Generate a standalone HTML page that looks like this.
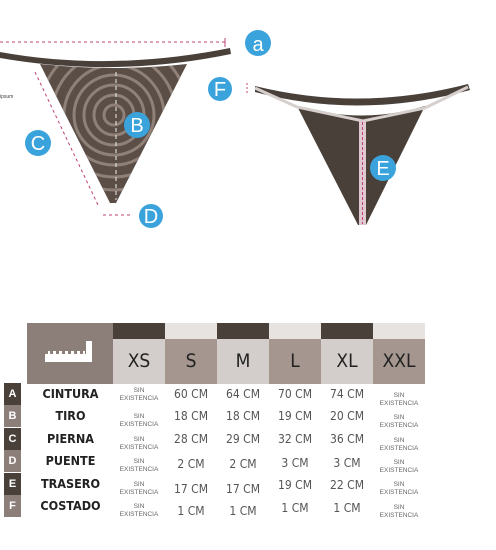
<!DOCTYPE html>
<html><head><meta charset="utf-8"><style>
*{margin:0;padding:0;box-sizing:border-box}
body{width:496px;height:550px;background:#fff;position:relative;overflow:hidden;font-family:"Liberation Sans",sans-serif}
.a{position:absolute}
.c{position:absolute;width:52px;text-align:center;color:#555;font-size:12px;font-family:"DejaVu Sans Condensed","Liberation Sans",sans-serif;font-weight:200}
.sin{position:absolute;width:52px;text-align:center;color:#666;font-size:6.5px;line-height:8px}
.lab{position:absolute;left:28px;width:85px;text-align:center;font-weight:bold;font-size:12.5px;color:#222;font-family:"DejaVu Sans Condensed","Liberation Sans",sans-serif}
.lt{position:absolute;left:4px;width:17px;height:22px;color:#fff;font-size:11px;text-align:center;line-height:22px;font-weight:bold}
.h{position:absolute;top:339px;height:45px;width:52px;text-align:center;font-size:19px;line-height:45px;color:#222;font-family:"DejaVu Sans Condensed","Liberation Sans",sans-serif}
</style></head><body>
<svg class="a" style="left:0;top:0" width="496" height="300">
<defs><clipPath id="t"><path d="M40,64 Q115,72 187,64 L116,203 L110,203 Z"/></clipPath></defs>
<line x1="0" y1="42" x2="225" y2="42" stroke="#c0407a" stroke-width="1" stroke-dasharray="3,3"/>
<line x1="225" y1="38" x2="225" y2="47" stroke="#c0407a"/>
<path d="M0,52 Q110,72 230,48 L231,54 Q115,78 0,58 Z" fill="#4a403a"/>
<path d="M40,64 Q115,72 187,64 L116,203 L110,203 Z" fill="#5a4e47"/>
<g clip-path="url(#t)" fill="none" stroke="#8f8178" stroke-width="3">
<circle cx="114" cy="115" r="10"/><circle cx="114" cy="115" r="20"/><circle cx="114" cy="115" r="30"/><circle cx="114" cy="115" r="40"/><circle cx="114" cy="115" r="50"/><circle cx="114" cy="115" r="62"/><circle cx="114" cy="115" r="75"/>
</g>
<line x1="116" y1="72" x2="116" y2="200" stroke="#eee" stroke-dasharray="4,3"/>
<line x1="35" y1="72" x2="98" y2="205" stroke="#c0407a" stroke-dasharray="3,3"/>
<line x1="103" y1="215" x2="132" y2="215" stroke="#c0407a" stroke-dasharray="3,3"/>
<text x="0" y="98" font-size="5" fill="#444">ipsum</text>
<path d="M255,86 Q360,112 468,84 L470,90 Q360,120 255,92 Z" fill="#4a403a"/>
<path d="M297,106 Q362,125 425,106 L366,225 L358,225 Z" fill="#4a403a"/>
<path d="M255,88 L297,107 L363,121 L425,108 L468,87" fill="none" stroke="#d6cfcc" stroke-width="3"/>
<rect x="359" y="121" width="7" height="104" fill="#e0c8d0"/>
<line x1="362.5" y1="122" x2="362.5" y2="224" stroke="#c0407a" stroke-dasharray="3,2"/>
<line x1="247" y1="83" x2="247" y2="94" stroke="#c0407a" stroke-dasharray="2,2"/>
<g font-size="20" fill="#fff" text-anchor="middle" font-family="Liberation Sans">
<circle cx="258" cy="43" r="13" fill="#3aa3dc"/><text x="258" y="51">a</text>
<circle cx="220" cy="89" r="12" fill="#3aa3dc"/><text x="220" y="96">F</text>
<circle cx="137" cy="125" r="13" fill="#3aa3dc"/><text x="137" y="132">B</text>
<circle cx="38" cy="143" r="13" fill="#3aa3dc"/><text x="38" y="150">C</text>
<circle cx="151" cy="216" r="12" fill="#3aa3dc"/><text x="151" y="223">D</text>
<circle cx="383" cy="168" r="13" fill="#3aa3dc"/><text x="383" y="175">E</text>
</g>
</svg>
<div class="a" style="left:27px;top:323px;width:86px;height:61px;background:#8c7f79"></div>
<div class="a" style="left:45px;top:351px;width:43px;height:11px;background:#fff;border-top:3px dotted #8c7f79"></div>
<div class="a" style="left:86px;top:341px;width:6px;height:21px;background:#fff"></div>
<div class="a" style="left:113px;top:323px;width:52px;height:16px;background:#4a403a"></div>
<div class="a" style="left:165px;top:323px;width:52px;height:16px;background:#e6e3e1"></div>
<div class="a" style="left:217px;top:323px;width:52px;height:16px;background:#4a403a"></div>
<div class="a" style="left:269px;top:323px;width:52px;height:16px;background:#e6e3e1"></div>
<div class="a" style="left:321px;top:323px;width:52px;height:16px;background:#4a403a"></div>
<div class="a" style="left:373px;top:323px;width:52px;height:16px;background:#e6e3e1"></div>
<div class="h" style="left:113px;background:#d3cecb">XS</div>
<div class="h" style="left:165px;background:#a5978f">S</div>
<div class="h" style="left:217px;background:#d3cecb">M</div>
<div class="h" style="left:269px;background:#a5978f">L</div>
<div class="h" style="left:321px;background:#d3cecb">XL</div>
<div class="h" style="left:373px;background:#a5978f">XXL</div>

<div class="lt" style="top:383px;background:#4a403a">A</div>
<div class="lt" style="top:405px;background:#8c7f79">B</div>
<div class="lt" style="top:428px;background:#4a403a">C</div>
<div class="lt" style="top:450px;background:#8c7f79">D</div>
<div class="lt" style="top:473px;background:#4a403a">E</div>
<div class="lt" style="top:495px;background:#8c7f79">F</div>

<div class="lab" style="top:386px">CINTURA</div>
<div class="lab" style="top:408px">TIRO</div>
<div class="lab" style="top:431px">PIERNA</div>
<div class="lab" style="top:453px">PUENTE</div>
<div class="lab" style="top:476px">TRASERO</div>
<div class="lab" style="top:498px">COSTADO</div>

<div class="sin" style="left:113px;top:387px">SIN<br>EXISTENCIA</div>
<div class="sin" style="left:113px;top:413px">SIN<br>EXISTENCIA</div>
<div class="sin" style="left:113px;top:436px">SIN<br>EXISTENCIA</div>
<div class="sin" style="left:113px;top:458px">SIN<br>EXISTENCIA</div>
<div class="sin" style="left:113px;top:481px">SIN<br>EXISTENCIA</div>
<div class="sin" style="left:113px;top:503px">SIN<br>EXISTENCIA</div>
<div class="sin" style="left:373px;top:392px">SIN<br>EXISTENCIA</div>
<div class="sin" style="left:373px;top:414px">SIN<br>EXISTENCIA</div>
<div class="sin" style="left:373px;top:437px">SIN<br>EXISTENCIA</div>
<div class="sin" style="left:373px;top:459px">SIN<br>EXISTENCIA</div>
<div class="sin" style="left:373px;top:481px">SIN<br>EXISTENCIA</div>
<div class="sin" style="left:373px;top:504px">SIN<br>EXISTENCIA</div>

<div class="c" style="left:165px;top:387px">60 CM</div>
<div class="c" style="left:165px;top:409px">18 CM</div>
<div class="c" style="left:165px;top:432px">28 CM</div>
<div class="c" style="left:165px;top:457px">2 CM</div>
<div class="c" style="left:165px;top:482px">17 CM</div>
<div class="c" style="left:165px;top:504px">1 CM</div>
<div class="c" style="left:217px;top:387px">64 CM</div>
<div class="c" style="left:217px;top:409px">18 CM</div>
<div class="c" style="left:217px;top:432px">29 CM</div>
<div class="c" style="left:217px;top:457px">2 CM</div>
<div class="c" style="left:217px;top:482px">17 CM</div>
<div class="c" style="left:217px;top:504px">1 CM</div>
<div class="c" style="left:269px;top:387px">70 CM</div>
<div class="c" style="left:269px;top:409px">19 CM</div>
<div class="c" style="left:269px;top:432px">32 CM</div>
<div class="c" style="left:269px;top:456px">3 CM</div>
<div class="c" style="left:269px;top:478px">19 CM</div>
<div class="c" style="left:269px;top:501px">1 CM</div>
<div class="c" style="left:321px;top:387px">74 CM</div>
<div class="c" style="left:321px;top:409px">20 CM</div>
<div class="c" style="left:321px;top:432px">36 CM</div>
<div class="c" style="left:321px;top:456px">3 CM</div>
<div class="c" style="left:321px;top:478px">22 CM</div>
<div class="c" style="left:321px;top:501px">1 CM</div>
</body></html>
